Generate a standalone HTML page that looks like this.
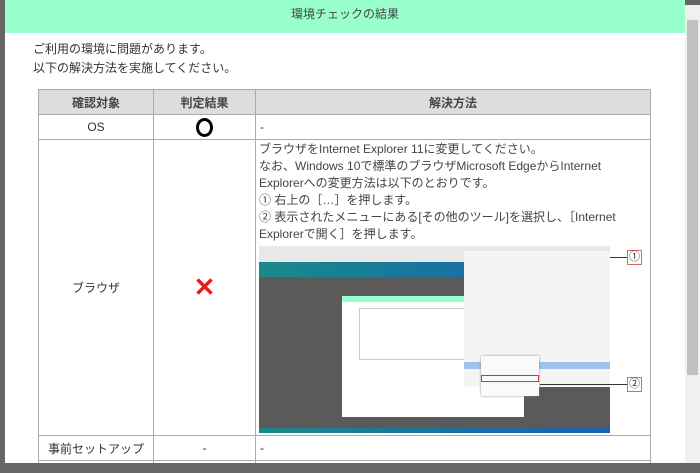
<!DOCTYPE html>
<html><head><meta charset="utf-8"><style>
html,body{margin:0;width:700px;height:473px;overflow:hidden}
body{background:#666;position:relative;font-family:"Liberation Sans","Noto Sans CJK JP",sans-serif;color:#333}
.modal{position:absolute;left:5px;top:0;width:680px;height:463px;background:#fff;overflow:hidden}
.hdr{position:absolute;left:0;top:0;width:680px;height:33px;background:#9fc;text-align:center;font-size:12px;line-height:28px;color:#444}
.sb{position:absolute;left:685px;top:5px;width:15px;height:458px;background:#f0f0f0}
.sb .th{position:absolute;left:2px;top:15px;width:11px;height:355px;background:#c1c1c1}
.msg{position:absolute;left:28px;top:40px;font-size:12px;line-height:19px}
table{position:absolute;left:33px;top:89px;border-collapse:collapse;font-size:12px}
td,th{border:1px solid #aaa;padding:0}
th{background:#ddd;font-weight:bold;height:24px;color:#444}
td{text-align:center}
.t{position:absolute;font-size:12px;line-height:17px}
.shot{position:absolute;left:259px;top:246px;width:351px;height:187px;background:#5a5a5a}
</style></head><body>
<div class="modal">
<div class="hdr">環境チェックの結果</div>
<div class="msg">ご利用の環境に問題があります。<br>以下の解決方法を実施してください。</div>
<table>
<tr><th style="width:114px">確認対象</th><th style="width:101px">判定結果</th><th style="width:394px">解決方法</th></tr>
<tr style="height:25px"><td>OS</td><td><span style="display:inline-block;width:11px;height:13px;border:3px solid #000;border-radius:50%;vertical-align:middle"></span></td><td style="text-align:left;padding-left:4px">-</td></tr>
<tr style="height:296px"><td>ブラウザ</td><td style="color:#e02020;font-size:26px;font-weight:bold">✕</td><td></td></tr>
<tr style="height:25px"><td>事前セットアップ</td><td>-</td><td style="text-align:left;padding-left:4px">-</td></tr>
<tr style="height:20px"><td></td><td></td><td></td></tr>
</table>
</div>
<div class="t" style="left:259px;top:141px;color:#444">ブラウザをInternet Explorer 11に変更してください。<br>なお、Windows 10で標準のブラウザMicrosoft EdgeからInternet<br>Explorerへの変更方法は以下のとおりです。<br>① 右上の［…］を押します。<br>② 表示されたメニューにある[その他のツール]を選択し、［Internet<br>Explorerで開く］を押します。</div>
<div class="shot">
<div style="position:absolute;left:0;top:0;width:351px;height:16px;background:#e8e8e8"></div>
<div style="position:absolute;left:0;top:16px;width:351px;height:15px;background:linear-gradient(90deg,#178a8a,#1a5fb5)"></div>
<div style="position:absolute;left:83px;top:50px;width:182px;height:121px;background:#fff"></div>
<div style="position:absolute;left:83px;top:50px;width:182px;height:6px;background:#9fc"></div>
<div style="position:absolute;left:100px;top:62px;width:155px;height:50px;border:1px solid #ccc"></div>
<div style="position:absolute;left:205px;top:5px;width:146px;height:136px;background:#f4f4f4"></div>
<div style="position:absolute;left:205px;top:116px;width:146px;height:7px;background:#9bc4ea"></div>
<div style="position:absolute;left:222px;top:110px;width:58px;height:40px;background:#fafafa;box-shadow:0 0 2px #888"></div>
<div style="position:absolute;left:222px;top:129px;width:56px;height:5px;border:1px solid #d33"></div>
<div style="position:absolute;left:0;top:182px;width:351px;height:5px;background:linear-gradient(90deg,#178a8a,#1a5fb5)"></div>
</div>
<div style="position:absolute;left:610px;top:257px;width:18px;height:1px;background:#333"></div>
<div style="position:absolute;left:627px;top:250px;width:13px;height:13px;border:1px solid #d66;font-size:11px;line-height:13px;text-align:center;background:#fff">①</div>
<div style="position:absolute;left:540px;top:384px;width:88px;height:1px;background:#333"></div>
<div style="position:absolute;left:627px;top:377px;width:13px;height:13px;border:1px solid #d66;font-size:11px;line-height:13px;text-align:center;background:#fff">②</div>
<div class="sb"><div class="th"></div></div>
</body></html>
